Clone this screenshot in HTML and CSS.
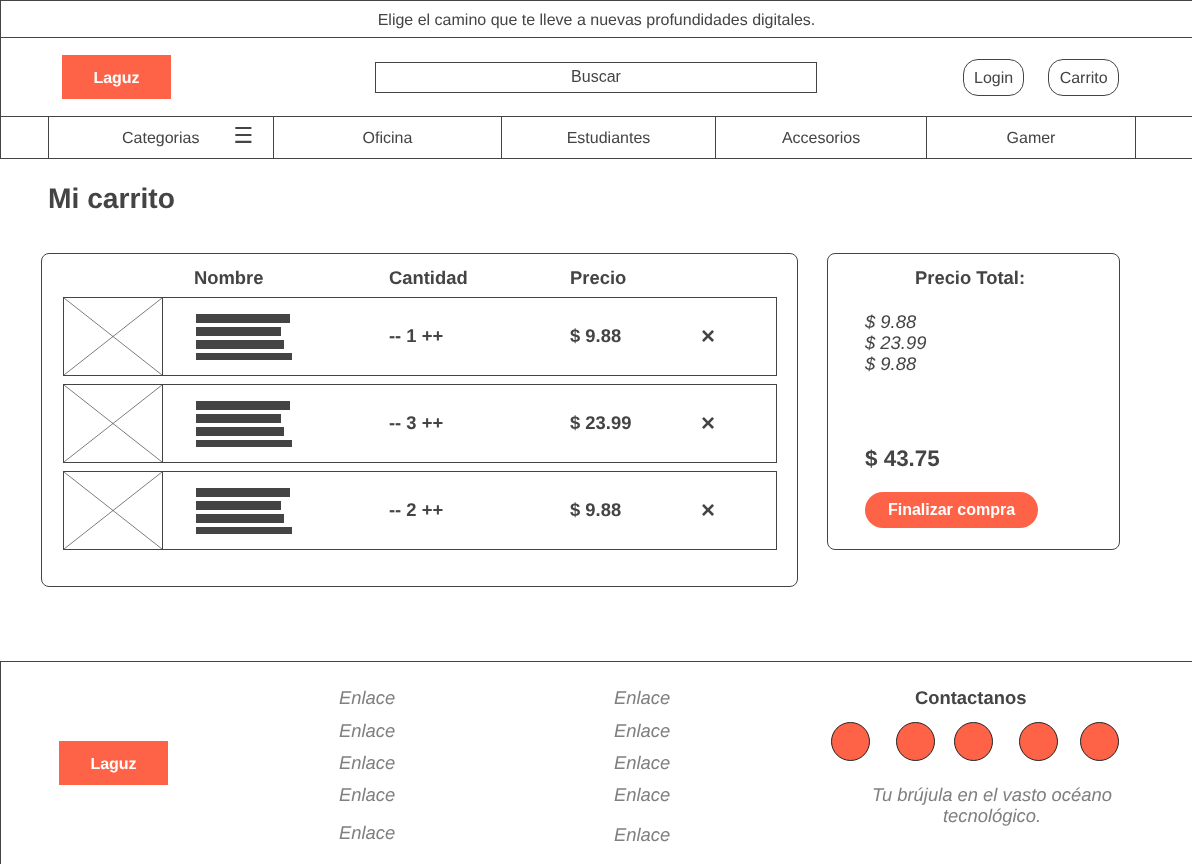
FILE: index.html
```html
<!DOCTYPE html>
<html lang="es">
<head>
    <meta charset="UTF-8">
    <meta name="viewport" content="width=device-width, initial-scale=1.0">
    <title>Laguz - Mi carrito</title>
    <link rel="stylesheet" href="styles.css">
</head>
<body>
<div class="topbar">Elige el camino que te lleve a nuevas profundidades digitales.</div>
<header class="header">
    <a class="logo" href="#">Laguz</a>
    <input class="search" type="text" placeholder="Buscar">
    <div class="account">
        <a class="pill" href="#">Login</a>
        <a class="pill pill-cart" href="#">Carrito</a>
    </div>
</header>
<nav class="nav">
    <span class="nav-cell"></span>
    <a class="nav-cell nav-categories" href="#">Categorias <span class="burger">☰</span></a>
    <a class="nav-cell" href="#">Oficina</a>
    <a class="nav-cell" href="#">Estudiantes</a>
    <a class="nav-cell" href="#">Accesorios</a>
    <a class="nav-cell" href="#">Gamer</a>
    <span class="nav-cell"></span>
</nav>
<main class="main">
    <h1 class="title">Mi carrito</h1>
    <div class="panels">
        <section class="cart">
            <div class="cart-head">
                <span>Nombre</span>
                <span>Cantidad</span>
                <span>Precio</span>
            </div>
            <div class="cart-row">
                <svg class="thumb" viewBox="0 0 98 77" preserveAspectRatio="none"><path d="M0 0L98 77M98 0L0 77"/></svg>
                <div class="name-lines"><i class="l1"></i><i class="l2"></i><i class="l3"></i><i class="l4"></i></div>
                <span>-- 1 ++</span>
                <span>$ 9.88</span>
                <span class="remove">×</span>
            </div>
            <div class="cart-row">
                <svg class="thumb" viewBox="0 0 98 77" preserveAspectRatio="none"><path d="M0 0L98 77M98 0L0 77"/></svg>
                <div class="name-lines"><i class="l1"></i><i class="l2"></i><i class="l3"></i><i class="l4"></i></div>
                <span>-- 3 ++</span>
                <span>$ 23.99</span>
                <span class="remove">×</span>
            </div>
            <div class="cart-row">
                <svg class="thumb" viewBox="0 0 98 77" preserveAspectRatio="none"><path d="M0 0L98 77M98 0L0 77"/></svg>
                <div class="name-lines"><i class="l1"></i><i class="l2"></i><i class="l3"></i><i class="l4"></i></div>
                <span>-- 2 ++</span>
                <span>$ 9.88</span>
                <span class="remove">×</span>
            </div>
        </section>
        <aside class="summary">
            <h2 class="summary-title">Precio Total:</h2>
            <div class="summary-prices">
                <div>$ 9.88</div>
                <div>$ 23.99</div>
                <div>$ 9.88</div>
            </div>
            <div class="summary-total">$ 43.75</div>
            <button class="checkout">Finalizar compra</button>
        </aside>
    </div>
</main>
<footer class="footer">
    <a class="logo footer-logo" href="#">Laguz</a>
    <ul class="links">
        <li><a href="#">Enlace</a></li>
        <li><a href="#">Enlace</a></li>
        <li><a href="#">Enlace</a></li>
        <li class="before-last"><a href="#">Enlace</a></li>
        <li><a href="#">Enlace</a></li>
    </ul>
    <ul class="links links-second">
        <li><a href="#">Enlace</a></li>
        <li><a href="#">Enlace</a></li>
        <li><a href="#">Enlace</a></li>
        <li class="before-last"><a href="#">Enlace</a></li>
        <li><a href="#">Enlace</a></li>
    </ul>
    <div class="contact">
        <h3 class="contact-title">Contactanos</h3>
        <div class="dots">
            <span class="dot"></span>
            <span class="dot"></span>
            <span class="dot"></span>
            <span class="dot"></span>
            <span class="dot"></span>
        </div>
        <p class="tagline">Tu brújula en el vasto océano tecnológico.</p>
    </div>
</footer>
</body>
</html>
```

FILE: styles.css
```css
* {
    box-sizing: border-box;
}
body {
    margin: 0;
    height: 864px;
    overflow: hidden;
    background-color: #fff;
    color: #444;
    font-family: "Liberation Sans", Arial, sans-serif;
    font-size: 16px;
    text-rendering: geometricPrecision;
    will-change: transform;
}
a {
    color: inherit;
    text-decoration: none;
}

/* top */
.topbar {
    height: 38px;
    padding-top: 2px;
    border: 1px solid #444;
    border-width: 1px 0 1px 1px;
    line-height: 35px;
    text-align: center;
}
.header {
    display: flex;
    align-items: center;
    height: 78px;
    padding-left: 61px;
    border-left: 1px solid #444;
}
.logo {
    display: block;
    width: 109px;
    height: 44px;
    padding-top: 2px;
    line-height: 43px;
    background-color: #ff6347;
    color: #fff;
    font-weight: bold;
    text-align: center;
}
.search {
    width: 442px;
    height: 31px;
    margin-left: 204px;
    padding: 0;
    border: 1px solid #444;
    border-radius: 0;
    outline: none;
    font-family: inherit;
    font-size: 16px;
    text-align: center;
}
.search::placeholder {
    color: #444;
    opacity: 1;
}
.account {
    display: flex;
    gap: 24px;
    margin-left: 146px;
}
.pill {
    height: 37px;
    padding: 1px 10px 0;
    border: 1px solid #444;
    border-radius: 15px;
    line-height: 35px;
}
.pill-cart {
    width: 71px;
    text-align: center;
}

/* nav */
.nav {
    display: grid;
    grid-template-columns: 48px 225px 228px 214px 211px 209px 57px;
    height: 43px;
    border-top: 1px solid #444;
    border-bottom: 1px solid #444;
}
.nav-cell {
    padding-top: 2px;
    border-left: 1px solid #444;
    line-height: 39px;
    text-align: center;
}
.nav-categories {
    display: flex;
    gap: 34px;
    padding-left: 73px;
    text-align: left;
}
.burger {
    font-family: "DejaVu Sans", sans-serif;
    font-size: 22px;
    line-height: 35px;
}

/* main */
.main {
    height: 502px;
    padding-top: 23px;
}
.title {
    margin: 0 0 39px 48px;
    font-size: 28.2px;
    line-height: 32px;
}
.panels {
    display: flex;
    align-items: flex-start;
    gap: 29px;
    margin-left: 41px;
}
.cart {
    width: 757px;
    height: 334px;
    padding: 13px 0 0 21px;
    border: 1px solid #444;
    border-radius: 8px;
}
.cart-head {
    display: grid;
    grid-template-columns: 195px 181px 1fr;
    margin: 0 0 9px 131px;
    font-size: 18.4px;
    font-weight: bold;
    line-height: 21px;
}
.cart-row {
    display: grid;
    grid-template-columns: 99px 226px 181px 131px 1fr;
    align-items: center;
    width: 714px;
    height: 79px;
    margin-bottom: 8px;
    border: 1px solid #444;
    font-size: 18.4px;
    font-weight: bold;
}
.cart-row > span {
    margin-top: -2px;
}
.thumb {
    display: block;
    width: 99px;
    height: 77px;
    border-right: 1px solid #444;
}
.thumb path {
    fill: none;
    stroke: #444;
    stroke-width: 0.7;
}
.name-lines {
    display: flex;
    flex-direction: column;
    gap: 4px;
    margin-left: 33px;
}
.name-lines i {
    display: block;
    height: 9px;
    background-color: #444;
}
.name-lines .l1 {
    width: 94px;
}
.name-lines .l2 {
    width: 85px;
}
.name-lines .l3 {
    width: 88px;
}
.name-lines .l4 {
    width: 96px;
    height: 7px;
}
.cart-row > .remove {
    margin-top: 0;
    font-size: 24px;
    line-height: 21px;
}

/* resumen */
.summary {
    width: 293px;
    height: 297px;
    padding: 13px 44px 0 37px;
    border: 1px solid #444;
    border-radius: 8px;
}
.summary-title {
    margin: 0 0 23px;
    font-size: 18.4px;
    line-height: 21px;
    text-align: center;
}
.summary-prices {
    font-size: 18.4px;
    font-style: italic;
    line-height: 21px;
}
.summary-total {
    margin-top: 72px;
    font-size: 22.4px;
    font-weight: bold;
    line-height: 26px;
}
.checkout {
    display: block;
    width: 173px;
    height: 36px;
    margin-top: 20px;
    padding: 0;
    border: none;
    border-radius: 18px;
    background-color: #ff6347;
    color: #fff;
    font-family: inherit;
    font-size: 16px;
    font-weight: bold;
}

/* footer */
.footer {
    display: flex;
    align-items: flex-start;
    height: 203px;
    padding: 25px 0 0 58px;
    border-top: 1px solid #444;
    border-left: 1px solid #444;
}
.footer-logo {
    margin-top: 54px;
}
.links {
    width: 275px;
    margin: 0 0 0 171px;
    padding: 0;
    color: #808080;
    font-size: 18.4px;
    font-style: italic;
    line-height: 21px;
    list-style: none;
}
.links li {
    margin-bottom: 11px;
}
.links li:first-child {
    margin-bottom: 12px;
}
.links .before-last {
    margin-bottom: 17px;
}
.links-second {
    width: 217px;
    margin-left: 0;
}
.links-second .before-last {
    margin-bottom: 19px;
}
.contact {
    width: 322px;
}
.contact-title {
    margin: 0 0 14px 84px;
    font-size: 18.4px;
    line-height: 21px;
}
.dots {
    display: flex;
}
.dot {
    width: 39px;
    height: 39px;
    border: 1px solid #222;
    border-radius: 50%;
    background-color: #ff6347;
}
.dot:nth-child(2),
.dot:nth-child(4) {
    margin-left: 26px;
}
.dot:nth-child(3) {
    margin-left: 19px;
}
.dot:nth-child(5) {
    margin-left: 22px;
}
.tagline {
    margin: 23px 0 0;
    color: #808080;
    font-size: 18.4px;
    font-style: italic;
    line-height: 21px;
    text-align: center;
}
```
